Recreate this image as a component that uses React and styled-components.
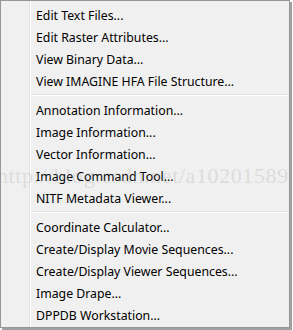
import React from "react";
import styled, { createGlobalStyle } from "styled-components";

const Global = createGlobalStyle`
  html, body { margin: 0; padding: 0; background: #ffffff; }
  body { font-family: "Noto Sans", "Open Sans", sans-serif; }
`;

const Frame = styled.div`
  position: relative;
  width: 293px;
  height: 330px;
  overflow: hidden;
`;

const Menu = styled.div`
  position: relative;
  box-sizing: border-box;
  width: 290px;
  height: 328px;
  background: #f0f0f0;
  border: 1px solid #979797;
  padding: 3px 2px 1px 2px;
  box-shadow: 2px 2px 0 #a0a0a0;
  display: flex;
  flex-direction: column;
`;

const Gutter = styled.div`
  position: absolute;
  top: 0;
  bottom: 0;
  left: 28px;
  width: 1px;
  background: #e2e3e3;
  border-right: 1px solid #ffffff;
`;

const Item = styled.div`
  height: 22px;
  display: flex;
  align-items: center;
  padding-left: 33px;
  font-size: 12.3px;
  color: #000000;
  white-space: nowrap;
  position: relative;
`;

const Separator = styled.div`
  height: 7px;
  display: flex;
  align-items: center;
  padding-left: 29px;
  &::before {
    content: "";
    flex: 1;
    height: 1px;
    background: #e0e0e0;
    border-bottom: 1px solid #ffffff;
    margin-top: -1px;
  }
`;

const Watermark = styled.div`
  position: absolute;
  left: -3px;
  top: 163px;
  font-family: "Liberation Serif", serif;
  font-size: 22px;
  color: rgba(150, 150, 150, 0.24);
  white-space: nowrap;
  letter-spacing: 0.6px;
  pointer-events: none;
`;

const groups = [
  [
    "Edit Text Files...",
    "Edit Raster Attributes...",
    "View Binary Data...",
    "View IMAGINE HFA File Structure...",
  ],
  [
    "Annotation Information...",
    "Image Information...",
    "Vector Information...",
    "Image Command Tool...",
    "NITF Metadata Viewer...",
  ],
  [
    "Coordinate Calculator...",
    "Create/Display Movie Sequences...",
    "Create/Display Viewer Sequences...",
    "Image Drape...",
    "DPPDB Workstation...",
  ],
];

export default function App() {
  return (
    <Frame>
      <Global />
      <Menu>
        <Gutter />
        {groups.map((g, gi) => (
          <React.Fragment key={gi}>
            {gi > 0 && <Separator />}
            {g.map((t) => (
              <Item key={t}>{t}</Item>
            ))}
          </React.Fragment>
        ))}
      </Menu>
      <Watermark>http://blog.csdn.net/a10201589</Watermark>
    </Frame>
  );
}
